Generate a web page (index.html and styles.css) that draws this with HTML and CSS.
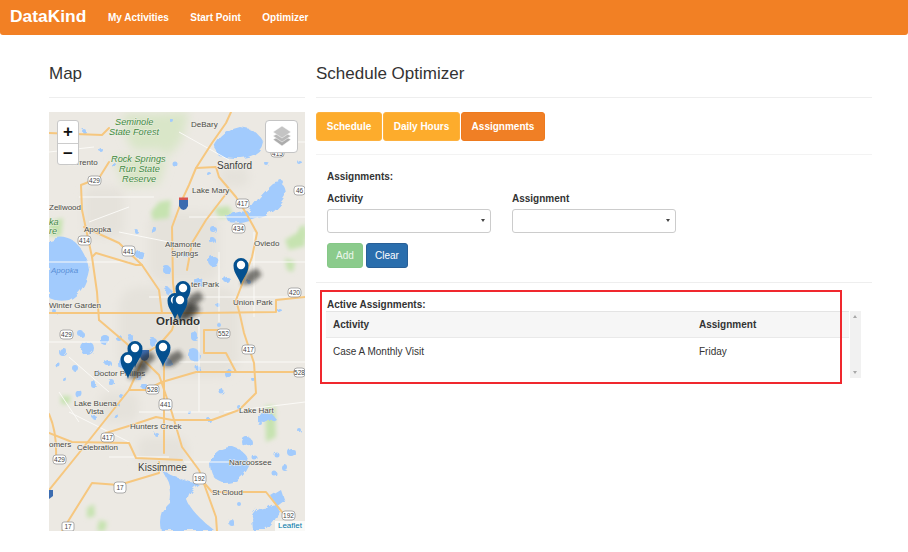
FILE: index.html
```html
<!DOCTYPE html>
<html lang="en">
<head>
<meta charset="utf-8">
<title>DataKind Schedule Optimizer</title>
<link rel="stylesheet" href="styles.css">
</head>
<body>
<nav class="navbar">
  <a class="brand">DataKind</a>
  <a class="nav-link">My Activities</a>
  <a class="nav-link">Start Point</a>
  <a class="nav-link">Optimizer</a>
</nav>
<main class="page">
  <section class="map-col">
    <h2 class="title">Map</h2>
    <div class="map">
      <svg class="map-svg" viewBox="0 0 256 419" width="256" height="419">
        <defs>
          <filter id="blur" x="-50%" y="-50%" width="200%" height="200%"><feGaussianBlur stdDeviation="2"/></filter>
          <filter id="wide" x="-30%" y="-30%" width="160%" height="160%"><feGaussianBlur stdDeviation="5"/></filter>
          <filter id="rough" x="-5%" y="-5%" width="110%" height="110%">
            <feTurbulence type="fractalNoise" baseFrequency="0.09" numOctaves="2" seed="4"/>
            <feDisplacementMap in="SourceGraphic" scale="7"/>
            <feGaussianBlur stdDeviation="0.4"/>
          </filter>
          <g id="pin">
            <path class="pin-shadow" d="M0 0L10 -1L21 -10L16 -17L6 -12Z"/>
            <path class="pin-body" d="M0 0C-1.500 -7 -7.500 -11 -7.500 -19.500A7.500 7.500 0 0 1 7.500 -19.500C7.500 -11 1.500 -7 0 0Z"/>
            <circle class="pin-eye" cx="0" cy="-20" r="4.200"/>
          </g>
        </defs>
        <rect class="land" width="256" height="419"/>
        <g class="urban">
          <rect x="35" y="75" width="40" height="50" rx="10"/>
          <rect x="100" y="100" width="70" height="70" rx="14"/>
          <rect x="70" y="175" width="120" height="90" rx="20"/>
          <rect x="170" y="55" width="30" height="20" rx="8"/>
          <rect x="88" y="325" width="50" height="30" rx="10"/>
          <rect x="50" y="280" width="40" height="30" rx="10"/>
        </g>
        <g class="forest">
          <path d="M74 2H112L140 0L132 30L118 45L112 38H84L76 22Z"/>
          <path d="M64 46H118L110 72L76 74Z"/>
        </g>
        <g class="park">
          <path d="M110 90L122 88L120 106L104 108L102 100Z"/>
          <path d="M165 96L180 94L184 104L170 106Z"/>
          <path d="M236 128L256 116V134L240 138Z"/>
          <path d="M216 294H226L227 325L217 330Z"/>
          <path d="M236 146L246 150L244 160L238 158Z"/>
          <path d="M38 396L45 392L46 404L38 406Z"/>
          <path d="M50 408L58 410L56 419L48 419Z"/>
          <path d="M12 284L22 284L20 292L12 292Z"/>
          <path d="M0 110L14 106L12 124L0 124Z"/>
          <path d="M250 116L256 112V126L250 128Z"/>
        </g>
        <g class="lake">
          <path d="M0 128Q14 122 26 130Q38 142 40 158Q36 180 20 188Q8 190 0 186Z"/>
          <path d="M164 34Q172 18 190 14Q208 16 214 30Q212 44 192 46Q178 46 170 44Z"/>
          <path d="M177 104Q190 98 200 100Q206 88 224 72Q236 66 236 84Q226 102 206 106Q188 112 180 110Z"/>
          <path d="M112 358Q130 368 150 372Q140 378 138 388Q142 400 166 419H112Q108 400 120 390Q124 372 112 358Z"/>
          <path d="M160 350Q168 334 184 335Q200 340 200 354Q192 372 174 371Q160 366 160 350Z"/>
          <circle cx="197" cy="329" r="5"/>
          <path d="M203 406Q208 394 218 396Q226 388 230 398Q226 412 216 419H204Z"/>
          <path d="M208 303L222 301L226 306L216 311L208 310Z"/>
          <path d="M222 384L232 378L236 390L228 396Z"/>
          <circle cx="38" cy="236" r="7"/><circle cx="56" cy="228" r="5"/><circle cx="32" cy="222" r="3"/><circle cx="14" cy="240" r="4"/>
          <circle cx="58" cy="250" r="3"/><circle cx="70" cy="226" r="3"/><circle cx="30" cy="282" r="3.500"/><circle cx="44" cy="272" r="3"/>
          <circle cx="62" cy="270" r="3"/><circle cx="72" cy="284" r="2"/><circle cx="68" cy="305" r="2"/><circle cx="45" cy="305" r="2"/>
          <circle cx="88" cy="264" r="3.500"/><circle cx="74" cy="252" r="5"/><circle cx="145" cy="243" r="6"/><circle cx="145" cy="224" r="4"/>
          <circle cx="118" cy="250" r="4"/><circle cx="165" cy="150" r="5"/><circle cx="163" cy="128" r="3"/><circle cx="150" cy="170" r="4"/>
          <circle cx="105" cy="118" r="3"/><circle cx="90" cy="142" r="4"/><circle cx="118" cy="158" r="4"/><circle cx="136" cy="142" r="3"/>
          <circle cx="180" cy="262" r="4"/><circle cx="173" cy="280" r="2.500"/><circle cx="205" cy="268" r="2"/><circle cx="190" cy="295" r="2"/>
          <circle cx="160" cy="308" r="2"/><circle cx="140" cy="300" r="2"/><circle cx="242" cy="340" r="4"/><circle cx="228" cy="343" r="2.500"/>
          <circle cx="236" cy="356" r="3"/><circle cx="206" cy="346" r="2.500"/><circle cx="226" cy="362" r="2.500"/><circle cx="107" cy="322" r="2"/>
          <circle cx="64" cy="52" r="2"/><circle cx="127" cy="53" r="2.500"/><circle cx="100" cy="20" r="2"/><circle cx="52" cy="38" r="2"/>
          <circle cx="160" cy="62" r="2"/><circle cx="218" cy="52" r="2"/><circle cx="232" cy="70" r="2"/><circle cx="250" cy="50" r="2"/>
          <circle cx="6" cy="200" r="2"/><circle cx="88" cy="120" r="2"/><circle cx="165" cy="118" r="3"/><circle cx="8" cy="252" r="2.500"/>
          <circle cx="212" cy="312" r="2"/><circle cx="250" cy="318" r="2"/><circle cx="182" cy="410" r="3"/><circle cx="190" cy="392" r="2"/>
          <circle cx="230" cy="198" r="2"/><circle cx="170" cy="213" r="2"/><circle cx="148" cy="255" r="2.500"/><circle cx="96" cy="275" r="3"/>
          <circle cx="104" cy="230" r="4"/><circle cx="82" cy="226" r="3"/><circle cx="26" cy="256" r="3"/><circle cx="50" cy="262" r="3"/>
          <circle cx="16" cy="268" r="2"/><circle cx="68" cy="292" r="2"/><circle cx="120" cy="180" r="3"/><circle cx="168" cy="192" r="2"/>
          <circle cx="122" cy="8" r="2"/><circle cx="36" cy="20" r="2"/><circle cx="200" cy="170" r="2"/><circle cx="178" cy="168" r="3"/>
        </g>
        <g class="minor">
          <path d="M0 230H60M0 150H80M30 85H105M70 120L120 130M140 105H256M100 185H256M150 205V300M170 140V210M205 120V205M130 250H256M20 300L80 330M90 300H170M175 300L256 290M60 345H120M135 350H190M195 150H256M230 30H256M130 20L180 48M0 40L45 35M20 245L60 280M10 280L30 310M40 110L80 95"/>
        </g>
        <g class="road">
          <path d="M182 0L177 11L163 31L147 56L140 73L133 88L123 115L124 171L128 201L123 218L110 233L97 241L80 278L30 341L0 378"/>
          <path d="M50 208L77 231L110 263L123 301L133 335L150 358L167 405L168 419"/>
          <path d="M147 56L167 55L170 65L187 85L197 101L208 121L203 145L192 175L187 188L191 203L195 221L205 251L207 281L190 298L163 308L123 308L107 305L83 313L57 321"/>
          <path d="M0 321L23 330L80 331L87 346L133 348"/>
          <path d="M80 278H97L113 270L147 260H256"/>
          <path d="M0 201H110L150 201L227 200V188L256 185"/>
          <path d="M60 50L50 66L32 73L33 98L40 131L43 145L47 141L87 153L93 153L110 178L113 201"/>
          <path d="M35 115L70 131L93 153"/>
          <path d="M43 145L48 180L50 208"/>
          <path d="M115 251V341"/>
          <path d="M13 419L43 371L70 373L110 361V350"/>
          <path d="M150 365L163 380H217L237 405"/>
          <path d="M0 21L53 23L60 16"/>
          <path d="M155 218V241H177L187 260M155 218H174"/>
          <path d="M180 78L157 108L143 131L138 158"/>
          <path d="M0 302Q8 320 7 345"/>
        </g>
        <g class="shield-us">
          <rect x="39" y="64" width="13" height="9" rx="3"/>
          <rect x="29" y="124" width="13" height="9" rx="3"/>
          <rect x="73" y="134" width="13" height="10" rx="3"/>
          <rect x="187" y="87" width="13" height="9" rx="3"/>
          <rect x="183" y="112" width="13" height="9" rx="3"/>
          <rect x="239" y="176" width="13" height="9" rx="3"/>
          <rect x="245" y="74" width="11" height="9" rx="3"/>
          <rect x="222" y="37" width="13" height="8" rx="3"/>
          <rect x="168" y="217" width="13" height="9" rx="3"/>
          <rect x="193" y="233" width="13" height="9" rx="3"/>
          <rect x="245" y="256" width="11" height="9" rx="3"/>
          <rect x="11" y="218" width="13" height="9" rx="3"/>
          <rect x="97" y="273" width="13" height="9" rx="3"/>
          <rect x="110" y="287" width="13" height="11" rx="3"/>
          <rect x="52" y="321" width="13" height="9" rx="3"/>
          <rect x="4" y="343" width="13" height="9" rx="3"/>
          <rect x="144" y="361" width="13" height="11" rx="3"/>
          <rect x="65" y="370" width="12" height="11" rx="3"/>
          <rect x="13" y="410" width="12" height="9" rx="2"/>
          <rect x="233" y="399" width="13" height="9" rx="3"/>
        </g>
        <g class="shield-text">
          <text x="45.500" y="71">429</text><text x="35.500" y="131">414</text><text x="79.500" y="141.500">441</text>
          <text x="193.500" y="94">417</text><text x="189.500" y="119">434</text><text x="245.500" y="183">420</text>
          <text x="250.500" y="81">46</text><text x="228.500" y="43.500">415</text><text x="174.500" y="224">552</text><text x="199.500" y="240">417</text>
          <text x="250.500" y="263">528</text><text x="17.500" y="225">429</text><text x="103.500" y="280">528</text>
          <text x="116.500" y="295">441</text><text x="58.500" y="328">417</text><text x="10.500" y="350">429</text>
          <text x="150.500" y="369">192</text><text x="71" y="378">17</text><text x="19" y="417">17</text>
          <text x="239.500" y="406">192</text>
        </g>
        <path class="interstate" d="M130 87H139V94Q138 97 134.500 98Q131 97 130 94Z"/>
        <path class="interstate-top" d="M130 85.500H139V88H130Z"/>
        <path class="interstate" d="M91 238H100V245Q99 248 95.500 249Q92 248 91 245Z"/>
        <path class="interstate" d="M0 378H4V384L0 387Z"/>
        <g class="label-green">
          <text x="66" y="13">Seminole</text><text x="60" y="23">State Forest</text>
          <text x="62" y="50">Rock Springs</text><text x="70" y="60">Run State</text><text x="73" y="70">Reserve</text>
          <text x="0" y="113">ka</text><text x="0" y="122">re</text>
        </g>
        <text class="label-blue" x="2" y="161">Apopka</text>
        <g class="label">
          <text x="142" y="15">DeBary</text><text x="18" y="53">Sorrento</text><text x="143" y="81">Lake Mary</text><text x="0" y="98">Zellwood</text>
          <text x="35" y="120">Apopka</text><text x="116" y="135">Altamonte</text><text x="122" y="144">Springs</text><text x="205" y="134">Oviedo</text>
          <text x="142" y="175">ter Park</text><text x="184" y="193">Union Park</text><text x="0" y="196">Winter Garden</text>
          <text x="45" y="264">Doctor Phillips</text><text x="25" y="294">Lake Buena</text><text x="37" y="301.500">Vista</text>
          <text x="190" y="301">Lake Hart</text><text x="81" y="317">Hunters Creek</text><text x="0" y="335">omers</text>
          <text x="28" y="338">Celebration</text><text x="180" y="353">Narcoossee</text><text x="163" y="383">St Cloud</text>
        </g>
        <g class="label-big">
          <text x="168" y="57">Sanford</text><text x="89" y="359">Kissimmee</text>
        </g>
        <text class="label-city" x="107" y="213">Orlando</text>
        <g>
          <use href="#pin" x="192" y="173"/>
          <use href="#pin" x="134" y="196"/>
          <use href="#pin" x="126" y="208"/>
          <use href="#pin" x="131" y="208"/>
          <use href="#pin" x="86" y="256"/>
          <use href="#pin" x="79" y="267"/>
          <use href="#pin" x="114" y="255"/>
        </g>
      </svg>
      <div class="zoom-ctl">
        <button class="zoom-btn">+</button>
        <button class="zoom-btn">−</button>
      </div>
      <div class="layers">
        <svg width="20" height="21" viewBox="0 0 20 21">
          <path class="layer-c" d="M10 9L19 13.500L10 20L1 13.500Z"/>
          <path class="layer-b" d="M10 5L19 10L10 16L1 10Z"/>
          <path class="layer-a" d="M10 0L19 6L10 12L1 6Z"/>
        </svg>
      </div>
      <div class="attribution">Leaflet</div>
    </div>
  </section>
  <section class="main-col">
    <h2 class="title">Schedule Optimizer</h2>
    <div class="tabs">
      <button class="tab tab-schedule">Schedule</button>
      <button class="tab tab-hours">Daily Hours</button>
      <button class="tab tab-active">Assignments</button>
    </div>
    <div class="panel">
      <div class="section-label">Assignments:</div>
      <div class="fields">
        <div class="field">
          <label class="field-label">Activity</label>
          <div class="select"></div>
        </div>
        <div class="field">
          <label class="field-label">Assignment</label>
          <div class="select"></div>
        </div>
      </div>
      <div class="actions">
        <button class="btn btn-add">Add</button>
        <button class="btn btn-clear">Clear</button>
      </div>
    </div>
    <div class="active">
      <div class="section-label">Active Assignments:</div>
      <div class="table-wrap">
        <div class="table">
          <div class="row row-head"><div class="cell-a">Activity</div><div class="cell-b">Assignment</div></div>
          <div class="row"><div class="cell-a">Case A Monthly Visit</div><div class="cell-b">Friday</div></div>
        </div>
        <div class="scrollbar"><span class="sb-up"></span><span class="sb-down"></span></div>
      </div>
      <div class="highlight"></div>
    </div>
  </section>
</main>
</body>
</html>
```

FILE: styles.css
```css
* { box-sizing: border-box; }
html, body { margin: 0; padding: 0; }
body { background: #fff; color: #333; font-family: "Liberation Sans", Arial, sans-serif; font-size: 10px; width: 908px; height: 552px; overflow: hidden; }

.navbar { height: 35px; background: #f28024; border-bottom-left-radius: 3px; border-bottom-right-radius: 3px; display: flex; align-items: center; padding-left: 10px; }
.brand { color: #fff; font-weight: 700; font-size: 17.400px; width: 98px; margin-top: -3px; }
.nav-link { color: #fff; font-weight: 700; font-size: 10px; margin-right: 21.500px; }

.page { display: flex; gap: 11px; padding: 0 36px 0 49px; }
.map-col { width: 256px; flex: none; }
.main-col { flex: 1; min-width: 0; }
.title { margin: 0; height: 63px; padding-top: 29px; border-bottom: 1px solid #eee; font-size: 17px; line-height: 19px; font-weight: 400; color: #333; }

.map { position: relative; width: 256px; height: 419px; margin-top: 14px; overflow: hidden; background: #ebe9e2; }
.map-svg { display: block; }
.land { fill: #ece9e3; }
.urban rect { fill: #e5e2db; filter: url(#wide); }
.forest path { fill: #d9e6c8; filter: url(#wide); }
.park path { fill: #c6e3b0; filter: url(#blur); }
.lake { filter: url(#rough); }
.lake path, .lake circle { fill: #a2cbfd; }
.minor path { fill: none; stroke: #fbfaf7; stroke-width: 1; }
.road path { fill: none; stroke: #f6c77f; stroke-width: 2; stroke-linejoin: round; stroke-linecap: round; }
.shield-us rect { fill: #fff; stroke: #8d8d8d; stroke-width: 0.700; }
.shield-text text { font-size: 6.500px; fill: #444; text-anchor: middle; font-family: "Liberation Sans", Arial, sans-serif; }
.interstate { fill: #3c6cb0; }
.interstate-top { fill: #d9534f; }
.label text { font-size: 8px; fill: #4a4a46; font-family: "Liberation Sans", Arial, sans-serif; paint-order: stroke; stroke: #f2f0ea; stroke-width: 1.200px; }
.label-big text { font-size: 10px; fill: #3d3d3a; font-family: "Liberation Sans", Arial, sans-serif; paint-order: stroke; stroke: #f2f0ea; stroke-width: 1.200px; }
.label-city { font-size: 11.500px; font-weight: 700; fill: #333; font-family: "Liberation Sans", Arial, sans-serif; paint-order: stroke; stroke: #f2f0ea; stroke-width: 1.200px; }
.label-green text { font-size: 9.200px; font-style: italic; fill: #3f8a3f; font-family: "Liberation Sans", Arial, sans-serif; paint-order: stroke; stroke: #eef0e4; stroke-width: 1px; }
.label-blue { font-size: 8px; font-style: italic; fill: #5a8fd6; font-family: "Liberation Sans", Arial, sans-serif; }
.pin-body { fill: #04508f; }
.pin-eye { fill: #fff; }
.pin-shadow { fill: #2c2a26; opacity: 0.6; filter: url(#blur); }

.zoom-ctl { position: absolute; left: 8px; top: 8px; width: 22px; background: #fff; border: 1px solid #c8c8c8; border-radius: 3px; display: flex; flex-direction: column; }
.zoom-btn { height: 21.500px; border: 0; background: none; padding: 0; font: 700 17px/20px "Liberation Sans", Arial, sans-serif; color: #111; }
.zoom-btn + .zoom-btn { border-top: 1px solid #ccc; }
.layers { position: absolute; left: 216px; top: 8px; width: 33px; height: 33px; background: #fff; border: 1px solid #c4c4c4; border-radius: 4px; display: flex; align-items: center; justify-content: center; }
.layer-a { fill: #c4c4c4; stroke: #fff; stroke-width: 0.500; }
.layer-b { fill: #b8b8b8; stroke: #fff; stroke-width: 0.500; }
.layer-c { fill: #acacac; stroke: #fff; stroke-width: 0.500; }
.attribution { position: absolute; right: 0; bottom: 0; padding: 0 3px; height: 10px; line-height: 10px; font-size: 8px; background: rgba(255,255,255,0.75); color: #0078a8; }

.tabs { display: flex; gap: 1px; margin-top: 14px; }
.tab { height: 29px; border: 1px solid #fdb13e; border-radius: 3px; background: #fdac2c; color: #fff; font: 700 10px "Liberation Sans", Arial, sans-serif; padding: 0; width: 66px; }
.tab-hours { width: 77px; }
.tab-active { background: #f07f25; border-color: #ee7a1e; width: 84px; }
.panel { margin-top: 13px; border-top: 1px solid #f3f3f3; border-bottom: 1px solid #eee; padding: 15px 11px 14px; height: 129px; }
.section-label { font-weight: 700; font-size: 10px; line-height: 13px; color: #333; }
.fields { display: flex; gap: 21px; margin-top: 9px; }
.field { width: 164px; }
.field-label { display: block; font-weight: 700; font-size: 10px; line-height: 13px; color: #333; }
.select { position: relative; height: 24px; margin-top: 4px; border: 1px solid #ccc; border-radius: 3px; background: #fff; }
.select::after { content: ""; position: absolute; right: 5px; top: 9px; border: 2.500px solid transparent; border-top: 3.500px solid #444; border-bottom: 0; }
.actions { display: flex; gap: 3px; margin-top: 10px; }
.btn { height: 25px; border-radius: 3px; font: 400 10px "Liberation Sans", Arial, sans-serif; color: #fff; padding: 0 9px; }
.btn-add { background: #8bcb8c; border: 1px solid #86c887; width: 36px; padding: 0; color: #eef7ee; }
.btn-clear { background: #2a6ead; border: 1px solid #285f96; width: 42px; padding: 0; }

.active { position: relative; padding: 15px 0 0 11px; }
.table-wrap { display: flex; gap: 1px; margin-left: -1px; width: 535px; }
.table { width: 523px; flex: none; }
.row { display: flex; height: 27px; align-items: center; padding-left: 7px; font-size: 10px; }
.row-head { background: #f6f6f6; border-top: 1px solid #e4e4e4; border-bottom: 1px solid #e9e9e9; font-weight: 700; }
.cell-a { width: 366px; }
.scrollbar { position: relative; width: 11px; height: 67px; background: #f1f1f1; }
.sb-up, .sb-down { position: absolute; left: 3px; border: 2.500px solid transparent; }
.sb-up { top: 4px; border-top: 0; border-bottom: 3px solid #a8a8a8; }
.sb-down { bottom: 4px; border-bottom: 0; border-top: 3px solid #a8a8a8; }
.highlight { position: absolute; left: 4px; top: 7px; width: 522px; height: 94px; border: 2px solid #f0282e; pointer-events: none; }
```
